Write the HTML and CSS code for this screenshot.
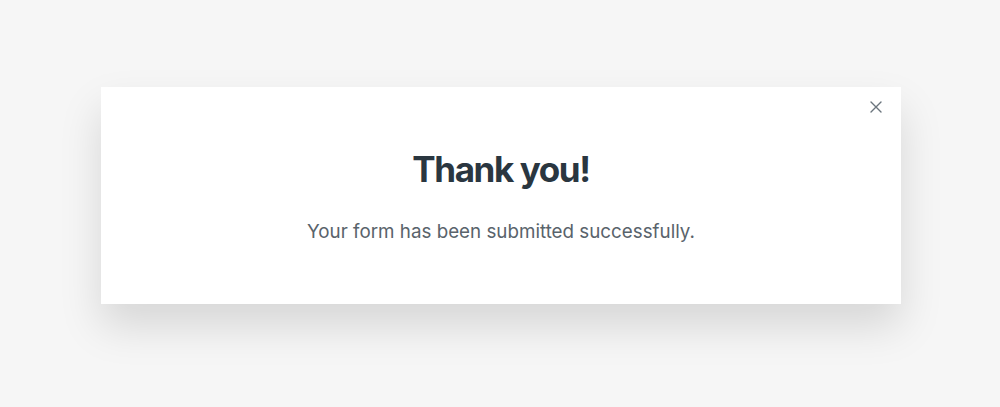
FILE: index.html
```html
<!DOCTYPE html>
<html lang="en">
<head>
<meta charset="utf-8">
<title>Thank you</title>
<link rel="stylesheet" href="styles.css">
</head>
<body>
<main class="stage">
  <section class="modal">
    <button class="close" aria-label="Close">
      <svg width="12" height="12" viewBox="0 0 12 12"><path d="M1 1L11 11M11 1L1 11" stroke="#6b757d" stroke-width="1.4" fill="none" stroke-linecap="round"/></svg>
    </button>
    <h1 class="title">Thank you!</h1>
    <p class="message">Your form has been submitted successfully.</p>
  </section>
</main>
</body>
</html>
```
FILE: styles.css
```css
html, body {
  margin: 0;
  padding: 0;
  background: #f6f6f6;
  height: 100%;
}
.stage {
  display: flex;
  justify-content: center;
  padding: 87px 0 0 2px;
}
.modal {
  position: relative;
  width: 800px;
  box-sizing: border-box;
  background: #ffffff;
  padding: 60px 40px 58px;
  text-align: center;
  box-shadow: 0 22px 40px rgba(0, 0, 0, 0.13);
}
.close {
  position: absolute;
  top: 8px;
  right: 13px;
  width: 24px;
  height: 24px;
  padding: 0;
  border: 0;
  background: transparent;
  display: flex;
  align-items: center;
  justify-content: center;
  cursor: pointer;
}
.title {
  margin: 0;
  font-family: Inter, "Noto Sans", sans-serif;
  font-weight: 700;
  font-size: 35px;
  line-height: 44px;
  letter-spacing: -1.4px;
  color: #2a3640;
}
.message {
  margin: 27px 0 0;
  font-family: Inter, "Noto Sans", sans-serif;
  font-size: 18.8px;
  line-height: 28px;
  color: #59636b;
}
```
